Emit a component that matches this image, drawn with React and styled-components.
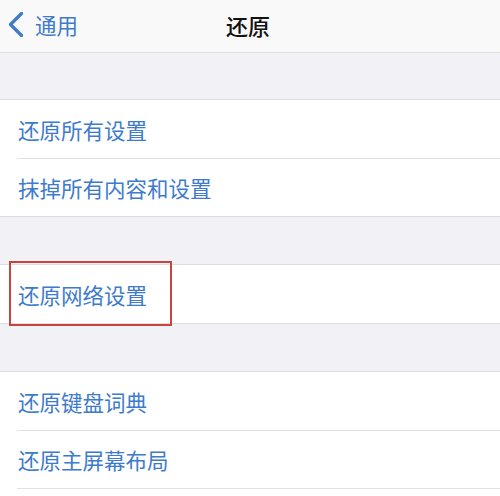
import React from "react";
import styled, { createGlobalStyle } from "styled-components";

const Global = createGlobalStyle`
  html, body { margin: 0; padding: 0; background: #f2f2f6; }
  body { font-family: "Noto Sans CJK SC", "Noto Sans", sans-serif; }
  * { box-sizing: border-box; }
`;

const Page = styled.div`
  width: 500px;
  height: 496px;
  overflow: hidden;
  background: #f2f2f6;
  display: flex;
  flex-direction: column;
`;

const NavBar = styled.div`
  height: 53px;
  flex: none;
  background: #f9f9f9;
  border-bottom: 1px solid #dedee0;
  display: grid;
  grid-template-columns: 1fr auto 1fr;
  align-items: center;
`;

const Back = styled.div`
  display: flex;
  align-items: center;
  gap: 11px;
  padding-left: 8px;
  color: #3e7bcb;
  font-size: 21.5px;
  padding-bottom: 3px;
`;

const Title = styled.div`
  font-size: 22px;
  font-weight: 500;
  color: #111;
  padding-bottom: 3px;
  margin-left: -4px;
`;

const Gap = styled.div`
  height: ${(p) => p.h}px;
  flex: none;
`;

const Group = styled.div`
  background: #fff;
  border-top: 1px solid #dedee0;
  border-bottom: 1px solid ${(p) => (p.open ? "transparent" : "#dedee0")};
  flex: ${(p) => (p.open ? "1" : "none")};
`;

const Row = styled.div`
  position: relative;
  height: 58px;
  display: flex;
  align-items: center;
  padding-left: 18px;
  font-size: 21.5px;
  color: #3e7bcb;
  & + & {
    border-top: 1px solid transparent;
  }
  & + &::before {
    content: "";
    position: absolute;
    top: -1px;
    left: 17px;
    right: 0;
    height: 1px;
    background: #e2e2e4;
  }
`;

const Separator = styled.div`
  height: 1px;
  margin-left: 17px;
  background: #e2e2e4;
`;

const Highlight = styled.div`
  position: absolute;
  top: -4px;
  left: 9px;
  width: 163px;
  height: 65px;
  border: 2px solid #c9443f;
  pointer-events: none;
`;

const Chevron = () => (
  <svg width="16" height="25" viewBox="0 0 16 25">
    <path d="M13.5 1.5 L2.5 12.5 L13.5 23.5" fill="none" stroke="#3e7bcb" strokeWidth="3.2" strokeLinecap="round" strokeLinejoin="round" />
  </svg>
);

export default function App() {
  return (
    <Page>
      <Global />
      <NavBar>
        <Back>
          <Chevron />
          <span>通用</span>
        </Back>
        <Title>还原</Title>
        <div />
      </NavBar>
      <Gap h={46} />
      <Group>
        <Row>还原所有设置</Row>
        <Row>抹掉所有内容和设置</Row>
      </Group>
      <Gap h={47} />
      <Group>
        <Row>
          还原网络设置
          <Highlight />
        </Row>
      </Group>
      <Gap h={47} />
      <Group open>
        <Row>还原键盘词典</Row>
        <Row>还原主屏幕布局</Row>
        <Separator />
      </Group>
    </Page>
  );
}
